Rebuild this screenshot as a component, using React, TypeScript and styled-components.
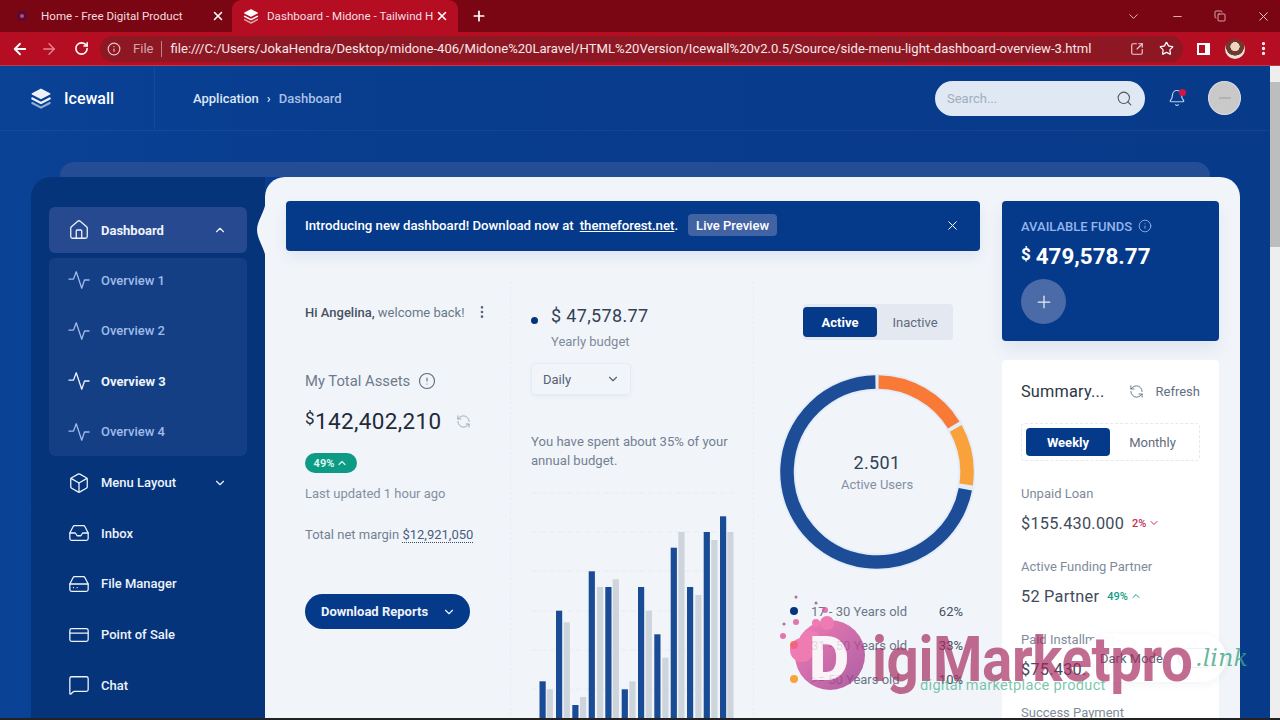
import React from "react";
import styled, { createGlobalStyle } from "styled-components";
import {
  ArrowLeft, ArrowRight, Bell, Box, ChevronDown, ChevronUp, CircleAlert, CreditCard,
  EllipsisVertical, HardDrive, House, Inbox, Info, MessageSquare, Minus, Plus,
  RefreshCcw, RotateCw, Search, Star, X, Copy, SquareArrowOutUpRight,
} from "lucide-react";

const GlobalStyle = createGlobalStyle`
  html, body { margin: 0; padding: 0; overflow: hidden; }
  body { font-family: Roboto, "Liberation Sans", sans-serif; color: #1e293b; }
  * { box-sizing: border-box; }
`;

const Frame = styled.div`
  position: relative;
  width: 1280px;
  height: 720px;
  overflow: hidden;
  display: flex;
  flex-direction: column;
  background: #222;
`;

/* browser chrome */
const TabBar = styled.div`
  height: 32px;
  background: #7b0613;
  display: flex;
  align-items: center;
  color: #fff;
  flex: none;
`;
const HomeTab = styled.div`
  width: 232px;
  height: 32px;
  padding: 0 7px 0 17px;
  display: flex;
  align-items: center;
  font-size: 11.6px;
  color: #f3dcdf;
`;
const ActiveTab = styled(HomeTab)`
  width: 226px;
  padding: 0 9px 0 11px;
  background: #b50d22;
  border-radius: 9px 9px 0 0;
  color: #f6dfe2;
`;
const TabTitle = styled.span<{ $wide?: boolean }>`
  flex: 1;
  margin-left: ${(p) => (p.$wide ? "14px" : "8px")};
  white-space: nowrap;
  overflow: hidden;
`;
const Favicon = styled.span`
  width: 10px;
  height: 10px;
  border-radius: 50%;
  background: #e0368c;
  border: 3px solid #4d1030;
  flex: none;
`;
const NewTab = styled.div`
  margin-left: 13px;
  display: flex;
`;
const WindowControls = styled.div`
  margin-left: auto;
  display: flex;
  align-items: center;
  gap: 30px;
  padding-right: 9px;
  color: #eac9cd;
`;
const Toolbar = styled.div`
  height: 34px;
  background: #b50d22;
  border-bottom: 1px solid #b83a55;
  display: flex;
  align-items: center;
  padding-left: 11px;
  flex: none;
  color: #fff;
`;
const NavButtons = styled.div`
  display: flex;
  align-items: center;
  gap: 11px;
  width: 89px;
  & > svg:last-child { margin-left: 5px; }
`;
const Omnibox = styled.div`
  width: 1083px;
  height: 26px;
  border-radius: 13px;
  background: #8e1724;
  display: flex;
  align-items: center;
  padding: 0 9px 0 7px;
  font-size: 13.1px;
  color: #f7e7e9;
`;
const FileLabel = styled.span`
  margin-left: 12px;
  padding-right: 7px;
  border-right: 1px solid #c78089;
  color: #d7a6ac;
  line-height: 16px;
`;
const UrlText = styled.span`
  margin-left: 9px;
  white-space: nowrap;
`;
const OmniIcons = styled.div`
  margin-left: auto;
  display: flex;
  align-items: center;
  gap: 15px;
  color: #eacdd0;
`;
const ToolbarRight = styled.div`
  display: flex;
  align-items: center;
  gap: 15px;
  margin-left: 14px;
  & > svg { margin-left: -5px; }
`;
const SidePanelIcon = styled.span`
  width: 13px;
  height: 12px;
  border: 2px solid #fff;
  border-right-width: 5px;
  background: #b50d22;
  display: block;
`;
const ProfilePic = styled.span`
  width: 20px;
  height: 20px;
  border-radius: 50%;
  background: radial-gradient(circle at 50% 38%, #f2d3c0 0 28%, #6a3b2e 30% 55%, #e9e3dc 58%);
  display: block;
`;

/* page */
const Viewport = styled.div`
  flex: 1;
  min-height: 0;
  display: flex;
`;
const Page = styled.div`
  flex: 1;
  min-width: 0;
  display: flex;
  flex-direction: column;
  background: linear-gradient(90deg, #0a4296 0, #083c8d 30%, #083a8a 100%);
  overflow: hidden;
`;
const Scrollbar = styled.div`
  width: 10px;
  background: #eeeeee;
  padding-top: 16px;
`;
const ScrollThumb = styled.div`
  height: 165px;
  background: #bdbdbd;
`;
const BottomEdge = styled.div`
  height: 2px;
  background: #222;
  flex: none;
`;

const TopBar = styled.div`
  height: 65px;
  flex: none;
  display: flex;
  align-items: center;
  border-bottom: 1px solid rgba(255, 255, 255, 0.05);
  padding-right: 29px;
`;
const Brand = styled.div`
  width: 155px;
  height: 100%;
  padding-left: 30px;
  display: flex;
  align-items: center;
  gap: 12px;
  border-right: 1px solid rgba(255, 255, 255, 0.05);
  color: #fff;
  font-size: 16px;
  font-weight: 500;
`;
const Crumbs = styled.div`
  margin-left: 38px;
  display: flex;
  align-items: center;
  gap: 8px;
  font-size: 13px;
  font-weight: 500;
  color: #dbe6f6;
`;
const CrumbLast = styled.span`
  color: #a9c0e6;
`;
const TopRight = styled.div`
  margin-left: auto;
  display: flex;
  align-items: center;
`;
const SearchBox = styled.div`
  width: 210px;
  height: 35px;
  border-radius: 18px;
  background: #dfe8f3;
  display: flex;
  align-items: center;
  justify-content: space-between;
  padding: 0 12px;
  font-size: 13px;
  color: #a0adbe;
`;
const BellWrap = styled.div`
  position: relative;
  margin-left: 23px;
  display: flex;
  color: #b9d2f5;
`;
const BellDot = styled.span`
  position: absolute;
  top: 0;
  right: 0;
  width: 7px;
  height: 7px;
  border-radius: 50%;
  background: #d3163f;
`;
const Avatar = styled.div`
  width: 33px;
  height: 34px;
  margin-left: 22px;
  border-radius: 50%;
  background: #c9c9c9;
  border: 1px solid #d9dee6;
  display: flex;
  align-items: center;
  justify-content: center;
`;
const AvatarMark = styled.span`
  width: 12px;
  height: 2px;
  background: #b3b3b3;
`;

const Stage = styled.div`
  flex: 1;
  min-height: 0;
  padding-top: 31px;
  display: flex;
  flex-direction: column;
`;
const GhostStrip = styled.div`
  height: 15px;
  margin: 0 60px;
  flex: none;
  border-radius: 14px 14px 0 0;
  background: #244d95;
`;
const Shell = styled.div`
  flex: 1;
  min-height: 0;
  margin: 0 30px 0 31px;
  display: flex;
`;

/* side menu */
const Sidebar = styled.aside`
  width: 234px;
  flex: none;
  padding: 30px 18px 0;
  background: #05347b;
  border-radius: 20px 0 0 0;
`;
const NavRow = styled.div<{ $active?: boolean; $sub?: boolean; $current?: boolean }>`
  height: ${(p) => (p.$active ? "46px" : "44px")};
  margin-bottom: ${(p) => (p.$active ? "5px" : "6.6px")};
  padding: 0 20px 0 19px;
  display: flex;
  align-items: center;
  gap: 11px;
  border-radius: 6px;
  font-size: 13px;
  font-weight: ${(p) => (p.$active || p.$current ? 700 : 500)};
  background: ${(p) => (p.$active ? "#26498f" : "transparent")};
  color: ${(p) => (p.$sub && !p.$current ? "#9fbbe9" : "#eef3fb")};
  &:last-child { margin-bottom: 0; }
`;
const NavLabel = styled.span`
  flex: 1;
`;
const SubPanel = styled.div`
  background: #153f85;
  border-radius: 6px;
  padding-bottom: 2px;
  margin-bottom: 5px;
`;
const PlainNav = styled.div`
  display: flex;
  flex-direction: column;
`;
const Notch = styled.svg`
  position: absolute;
  left: -9px;
  top: 24px;
`;

/* white panel */
const Content = styled.main`
  position: relative;
  flex: 1;
  min-width: 0;
  display: flex;
  gap: 22px;
  padding: 24px 21px 0;
  background: #f1f5fa;
  border-radius: 20px 20px 0 0;
`;
const MainColumn = styled.div`
  width: 694px;
  flex: none;
`;
const SideColumn = styled.div`
  width: 217px;
  flex: none;
  display: flex;
  flex-direction: column;
  gap: 19px;
`;
const Banner = styled.div`
  height: 50px;
  background: #053a8a;
  border-radius: 4px;
  display: flex;
  align-items: center;
  padding: 0 20px 2px 19px;
  color: #fff;
  font-size: 13.2px;
  font-weight: 500;
  box-shadow: 0 6px 14px rgba(15, 50, 110, 0.08);
`;
const BannerLink = styled.span`
  margin-left: 6px;
  text-decoration: underline;
`;
const PreviewTag = styled.span`
  margin-left: 10px;
  width: 89px;
  height: 22px;
  border-radius: 4px;
  background: #4263a3;
  display: flex;
  align-items: center;
  justify-content: center;
  font-size: 13px;
`;
const BannerClose = styled.span`
  margin-left: auto;
  display: flex;
`;

const Panels = styled.div`
  margin-top: 30px;
  display: grid;
  grid-template-columns: 225px 243px 226px;
`;
const StatsCol = styled.div`
  padding: 22px 20px 0 19px;
  border-right: 1px dashed #e8ecf3;
  height: 460px;
`;
const BudgetCol = styled(StatsCol)`
  padding-left: 20px;
`;
const UsersCol = styled.div`
  padding: 23px 0 0 26px;
`;

const Greeting = styled.div`
  height: 18px;
  display: flex;
  align-items: center;
  justify-content: space-between;
  font-size: 13px;
  color: #6b7789;
  width: 185px;
  & > svg { color: #5b6678; }
`;
const GreetName = styled.strong`
  font-weight: 500;
  color: #475163;
`;
const AssetsTitle = styled.div`
  margin-top: 50px;
  height: 20px;
  display: flex;
  align-items: center;
  gap: 8px;
  font-size: 14.8px;
  color: #6e7a8c;
  & > svg { color: #5f6a7b; }
`;
const BigAmount = styled.div`
  margin-top: 15px;
  height: 30px;
  display: flex;
  align-items: center;
  font-size: 22.5px;
  letter-spacing: 0.35px;
  color: #1f2a3a;
  & > svg { margin-left: 15px; color: #9aa5b4; }
`;
const Currency = styled.span`
  align-self: flex-start;
  font-size: 17px;
  line-height: 24px;
`;
const UpBadge = styled.div`
  margin-top: 17px;
  width: 52px;
  height: 20px;
  border-radius: 10px;
  background: #0e9b85;
  color: #d8f5ee;
  display: flex;
  align-items: center;
  justify-content: center;
  gap: 2px;
  font-size: 11px;
  font-weight: 700;
`;
const Muted = styled.div`
  margin-top: 12px;
  height: 18px;
  line-height: 18px;
  font-size: 13px;
  color: #8490a1;
`;
const NetMargin = styled(Muted)`
  margin-top: 23px;
  color: #758193;
`;
const Dotted = styled.span`
  color: #4b5e80;
  border-bottom: 1px dotted #3c4a66;
`;
const DownloadButton = styled.div`
  margin-top: 50px;
  width: 165px;
  height: 35px;
  border-radius: 18px;
  background: #053a8a;
  color: #eef3fb;
  display: flex;
  align-items: center;
  padding: 0 14px 0 16px;
  justify-content: space-between;
  font-size: 13px;
  font-weight: 700;
`;

const BudgetHead = styled.div`
  height: 24px;
  display: flex;
  align-items: center;
  font-size: 18px;
  letter-spacing: 0.35px;
  color: #334155;
`;
const BudgetDot = styled.span`
  width: 7px;
  height: 7px;
  border-radius: 50%;
  background: #05347b;
  margin: 10px 13px 0 0;
`;
const BudgetCaption = styled.div`
  margin: 6px 0 0 20px;
  height: 18px;
  line-height: 18px;
  font-size: 13px;
  color: #7e8a9b;
`;
const Dropdown = styled.div`
  margin-top: 12px;
  width: 100px;
  height: 32px;
  padding: 0 10px 0 11px;
  display: flex;
  align-items: center;
  justify-content: space-between;
  border: 1px solid #e6ebf2;
  border-radius: 4px;
  box-shadow: 0 2px 4px rgba(30, 50, 90, 0.05);
  font-size: 13px;
  color: #566174;
`;
const Para = styled.p`
  margin: 36.5px 0 0;
  width: 205px;
  font-size: 13.1px;
  line-height: 19px;
  color: #748092;
`;
const Chart = styled.svg`
  display: block;
  margin-top: 20px;
`;

const Segmented = styled.div`
  margin-left: 23px;
  width: 150px;
  height: 36px;
  padding: 3px 0;
  border-radius: 4px;
  background: #e4e9f1;
  display: flex;
  font-size: 13px;
`;
const SegActive = styled.div`
  width: 74px;
  border-radius: 4px;
  background: #053a8a;
  color: #fff;
  font-weight: 700;
  display: flex;
  align-items: center;
  justify-content: center;
`;
const SegIdle = styled.div`
  flex: 1;
  color: #5f6b7c;
  display: flex;
  align-items: center;
  justify-content: center;
`;
const DonutWrap = styled.div`
  position: relative;
  margin: 34px 0 0 -1px;
  width: 196px;
  height: 196px;
`;
const DonutCenter = styled.div`
  position: absolute;
  inset: 0;
  display: flex;
  flex-direction: column;
  align-items: center;
  justify-content: center;
`;
const DonutValue = styled.div`
  font-size: 18px;
  letter-spacing: 0.4px;
  color: #334155;
`;
const DonutLabel = styled.div`
  margin-top: 4px;
  font-size: 13px;
  color: #8490a1;
`;
const Legend = styled.div`
  margin-top: 31px;
  width: 183px;
  display: flex;
  flex-direction: column;
  gap: 14px;
  padding-left: 10px;
`;
const LegendRow = styled.div`
  height: 20px;
  display: flex;
  align-items: center;
  gap: 13px;
  font-size: 13px;
  color: #6b7789;
`;
const LegendDot = styled.span<{ $color: string }>`
  width: 8px;
  height: 8px;
  border-radius: 50%;
  background: ${(p) => p.$color};
`;
const LegendPct = styled.span`
  margin-left: auto;
  color: #475163;
`;

/* right column */
const FundsCard = styled.div`
  height: 140px;
  flex: none;
  padding: 16px 19px 0;
  background: #053a8a;
  border-radius: 4px;
  color: #fff;
  box-shadow: 0 8px 16px rgba(15, 50, 110, 0.08);
`;
const FundsTitle = styled.div`
  height: 18px;
  display: flex;
  align-items: center;
  gap: 6px;
  font-size: 13px;
  font-weight: 500;
  color: #94b4ec;
`;
const FundsValue = styled.div`
  margin-top: 8px;
  height: 26px;
  display: flex;
  font-size: 22.4px;
  font-weight: 700;
  align-items: center;
  gap: 5px;
`;
const FundsCurrency = styled.span`
  font-size: 17px;
  align-self: flex-start;
  line-height: 22px;
`;
const RoundPlus = styled.div`
  margin-top: 10px;
  width: 45px;
  height: 45px;
  border-radius: 50%;
  background: #4a6aa8;
  display: flex;
  align-items: center;
  justify-content: center;
  color: #e6edf9;
`;
const SummaryCard = styled.div`
  flex: 1;
  min-height: 0;
  overflow: hidden;
  padding: 20px 19px 0;
  background: #fff;
  border-radius: 4px 4px 0 0;
`;
const SummaryHead = styled.div`
  height: 22px;
  display: flex;
  align-items: center;
  font-size: 16.3px;
  letter-spacing: 0.2px;
  color: #2c3645;
`;
const RefreshLink = styled.span`
  margin-left: auto;
  display: flex;
  align-items: center;
  gap: 12px;
  font-size: 13px;
  letter-spacing: 0;
  color: #637084;
`;
const PeriodTabs = styled.div`
  margin-top: 21px;
  height: 38px;
  padding: 4px;
  border: 1px dashed #e4e8ef;
  border-radius: 4px;
  display: flex;
  font-size: 13px;
`;
const PeriodActive = styled(SegActive)`
  width: 84px;
`;
const SummaryLabel = styled.div`
  margin-top: 24px;
  height: 18px;
  line-height: 18px;
  font-size: 13px;
  color: #7f8b9c;
  & ~ & { margin-top: 23px; }
`;
const SummaryValue = styled.div`
  margin-top: 8px;
  height: 24px;
  display: flex;
  align-items: center;
  font-size: 16.3px;
  letter-spacing: 0.25px;
  color: #414b5b;
`;
const Delta = styled.span<{ $up?: boolean }>`
  margin-left: 8px;
  display: flex;
  align-items: center;
  gap: 2px;
  font-size: 11px;
  letter-spacing: 0;
  font-weight: 500;
  color: ${(p) => (p.$up ? "#0e9b85" : "#c4305a")};
`;

/* floating bits */
const DarkModePill = styled.div`
  position: absolute;
  left: 1083px;
  top: 634px;
  width: 143px;
  height: 48px;
  border-radius: 24px;
  background: rgba(255, 255, 255, 0.96);
  box-shadow: 0 2px 10px rgba(30, 50, 90, 0.06);
  display: flex;
  align-items: center;
  padding: 0 12px 0 17px;
  font-size: 13px;
  color: #5c6778;
  justify-content: space-between;
`;
const FaintToggle = styled.span`
  width: 36px;
  height: 20px;
  border-radius: 10px;
  border: 1px solid #eef1f5;
`;
const Watermark = styled.div`
  position: absolute;
  left: 778px;
  top: 594px;
  width: 480px;
  height: 110px;
  pointer-events: none;
  display: flex;
`;
const WaterLogo = styled.div`
  position: relative;
  width: 92px;
  height: 100px;
  flex: none;
  opacity: 0.8;
`;
const LogoLetter = styled.span`
  position: absolute;
  left: 31px;
  top: 27px;
  font-size: 62px;
  line-height: 76px;
  font-weight: 900;
  color: #fdf3f7;
`;
const WaterText = styled.div`
  position: relative;
  flex: 1;
`;
const WaterWord = styled.span`
  position: absolute;
  left: 2px;
  top: 33px;
  font-size: 56.5px;
  line-height: 66px;
  font-weight: 700;
  letter-spacing: -0.4px;
  color: rgba(164, 38, 92, 0.68);
  white-space: nowrap;
  transform: scaleY(1.12);
`;
const WaterLink = styled.span`
  position: absolute;
  left: 325px;
  top: 44px;
  font-family: "DejaVu Serif", serif;
  font-style: italic;
  font-size: 24px;
  line-height: 40px;
  color: rgba(60, 165, 130, 0.78);
`;
const WaterSub = styled.span`
  position: absolute;
  left: 50px;
  top: 81px;
  font-size: 14.6px;
  line-height: 20px;
  letter-spacing: 0.3px;
  color: rgba(70, 175, 140, 0.72);
  white-space: nowrap;
`;

const ActivityIcon = ({ size = 22 }: { size?: number }) => (
  <svg width={size} height={size} viewBox="0 0 24 24" fill="none" stroke="currentColor" strokeWidth="1.4" strokeLinecap="round" strokeLinejoin="round">
    <polyline points="1 11 6 11 9 3 15 21 18 12 23 12" />
  </svg>
);

// the stacked logo: solid top sheet, two chevrons under it
const StackIcon = ({ size = 24, color = "#eef3fb" }: { size?: number; color?: string }) => (
  <svg width={size} height={size} viewBox="0 0 24 24" fill="none" stroke={color} strokeWidth="2.4" strokeLinecap="round" strokeLinejoin="round">
    <path d="M12 2.5 21.5 7.5 12 12.5 2.5 7.5Z" fill={color} strokeWidth="1.6" />
    <polyline points="2.5 12.5 12 17.5 21.5 12.5" />
    <polyline points="2.5 17.5 12 22.5 21.5 17.5" opacity="0.6" />
  </svg>
);

const bars = [
  [539.5, 681.3, 546.7, 689.3],
  [556, 610.7, 563.7, 622.3],
  [572.3, 705, 580, 697],
  [588.7, 571.3, 597, 587],
  [605.3, 587, 612.7, 579.3],
  [621.7, 689.3, 629.3, 681.3],
  [638, 587, 645.7, 610.7],
  [654.3, 634.3, 662.3, 657.7],
  [670.7, 547.7, 678.3, 532],
  [687, 587, 695.3, 595],
  [703.7, 532, 711.3, 540],
  [720, 516.3, 727.3, 532],
];
const gridLines = [493, 532, 571, 611, 650, 689];

const ages = [
  { label: "17 - 30 Years old", pct: "62%", color: "#05347b" },
  { label: "31 - 50 Years old", pct: "33%", color: "#f97a36" },
  { label: ">= 50 Years old", pct: "10%", color: "#f9a23b" },
];

// angle in degrees clockwise from 12 o'clock
function arc(from: number, to: number, r = 90, c = 98) {
  const pt = (a: number) => {
    const t = ((a - 90) * Math.PI) / 180;
    return `${(c + r * Math.cos(t)).toFixed(2)} ${(c + r * Math.sin(t)).toFixed(2)}`;
  };
  return `M ${pt(from)} A ${r} ${r} 0 ${to - from > 180 ? 1 : 0} 1 ${pt(to)}`;
}

export default function App() {
  return (
    <Frame>
      <GlobalStyle />
      <TabBar>
        <HomeTab>
          <Favicon />
          <TabTitle $wide>Home - Free Digital Product</TabTitle>
          <X size={14} color="#fff" strokeWidth={2.6} />
        </HomeTab>
        <ActiveTab>
          <StackIcon size={16} color="#fff" />
          <TabTitle>Dashboard - Midone - Tailwind H</TabTitle>
          <X size={14} color="#fff" strokeWidth={2.6} />
        </ActiveTab>
        <NewTab><Plus size={16} strokeWidth={2.6} /></NewTab>
        <WindowControls>
          <ChevronDown size={15} strokeWidth={1.4} />
          <Minus size={13} strokeWidth={1.6} />
          <Copy size={12} strokeWidth={1.6} />
          <X size={15} strokeWidth={1.6} />
        </WindowControls>
      </TabBar>
      <Toolbar>
        <NavButtons>
          <ArrowLeft size={18} strokeWidth={2.4} />
          <ArrowRight size={18} strokeWidth={1.8} color="#e58793" />
          <RotateCw size={15} strokeWidth={2.6} />
        </NavButtons>
        <Omnibox>
          <Info size={14} color="#e7c3c8" />
          <FileLabel>File</FileLabel>
          <UrlText>file:///C:/Users/JokaHendra/Desktop/midone-406/Midone%20Laravel/HTML%20Version/Icewall%20v2.0.5/Source/side-menu-light-dashboard-overview-3.html</UrlText>
          <OmniIcons>
            <SquareArrowOutUpRight size={14} />
            <Star size={15} color="#fff" />
          </OmniIcons>
        </Omnibox>
        <ToolbarRight>
          <SidePanelIcon />
          <ProfilePic />
          <EllipsisVertical size={17} strokeWidth={2.6} />
        </ToolbarRight>
      </Toolbar>
      <Viewport>
        <Page>
          <TopBar>
            <Brand>
              <StackIcon size={22} />
              Icewall
            </Brand>
            <Crumbs>
              Application
              <span>›</span>
              <CrumbLast>Dashboard</CrumbLast>
            </Crumbs>
            <TopRight>
              <SearchBox>
                Search...
                <Search size={17} color="#4c5665" strokeWidth={1.5} />
              </SearchBox>
              <BellWrap>
                <Bell size={18} strokeWidth={1.6} />
                <BellDot />
              </BellWrap>
              <Avatar><AvatarMark /></Avatar>
            </TopRight>
          </TopBar>
          <Stage>
            <GhostStrip />
            <Shell>
              <Sidebar>
                <NavRow $active>
                  <House size={22} strokeWidth={1.4} />
                  <NavLabel>Dashboard</NavLabel>
                  <ChevronUp size={14} />
                </NavRow>
                <SubPanel>
                  <NavRow $sub><ActivityIcon /><NavLabel>Overview 1</NavLabel></NavRow>
                  <NavRow $sub><ActivityIcon /><NavLabel>Overview 2</NavLabel></NavRow>
                  <NavRow $sub $current><ActivityIcon /><NavLabel>Overview 3</NavLabel></NavRow>
                  <NavRow $sub><ActivityIcon /><NavLabel>Overview 4</NavLabel></NavRow>
                </SubPanel>
                <PlainNav>
                  <NavRow>
                    <Box size={22} strokeWidth={1.4} />
                    <NavLabel>Menu Layout</NavLabel>
                    <ChevronDown size={14} />
                  </NavRow>
                  <NavRow><Inbox size={22} strokeWidth={1.4} /><NavLabel>Inbox</NavLabel></NavRow>
                  <NavRow><HardDrive size={22} strokeWidth={1.4} /><NavLabel>File Manager</NavLabel></NavRow>
                  <NavRow><CreditCard size={22} strokeWidth={1.4} /><NavLabel>Point of Sale</NavLabel></NavRow>
                  <NavRow><MessageSquare size={22} strokeWidth={1.4} /><NavLabel>Chat</NavLabel></NavRow>
                </PlainNav>
              </Sidebar>
              <Content>
                <Notch width="10" height="58" viewBox="0 0 10 58">
                  <path d="M10 0 C9 10 1 20 1 29 C1 38 9 48 10 58 Z" fill="#f1f5fa" />
                </Notch>
                <MainColumn>
                  <Banner>
                    Introducing new dashboard! Download now at
                    <BannerLink>themeforest.net</BannerLink>.
                    <PreviewTag>Live Preview</PreviewTag>
                    <BannerClose><X size={15} strokeWidth={1.6} /></BannerClose>
                  </Banner>
                  <Panels>
                    <StatsCol>
                      <Greeting>
                        <span><GreetName>Hi Angelina,</GreetName> welcome back!</span>
                        <EllipsisVertical size={16} />
                      </Greeting>
                      <AssetsTitle>
                        My Total Assets
                        <CircleAlert size={18} strokeWidth={1.5} />
                      </AssetsTitle>
                      <BigAmount>
                        <Currency>$</Currency>142,402,210
                        <RefreshCcw size={15} strokeWidth={1.5} />
                      </BigAmount>
                      <UpBadge>49%<ChevronUp size={12} strokeWidth={2.4} /></UpBadge>
                      <Muted>Last updated 1 hour ago</Muted>
                      <NetMargin>Total net margin <Dotted>$12,921,050</Dotted></NetMargin>
                      <DownloadButton>
                        Download Reports
                        <ChevronDown size={14} />
                      </DownloadButton>
                    </StatsCol>
                    <BudgetCol>
                      <BudgetHead>
                        <BudgetDot />
                        $ 47,578.77
                      </BudgetHead>
                      <BudgetCaption>Yearly budget</BudgetCaption>
                      <Dropdown>Daily<ChevronDown size={14} /></Dropdown>
                      <Para>You have spent about 35% of your annual budget.</Para>
                      <Chart width="212" height="230" viewBox="531 490 212 230">
                        {gridLines.map((y) => (
                          <line key={y} x1="531" x2="733" y1={y} y2={y} stroke="#e9edf3" strokeDasharray="6 3" />
                        ))}
                        {bars.map(([dx, dy, lx, ly]) => (
                          <g key={dx}>
                            <rect x={dx} y={dy} width="6.2" height={720 - dy} fill="#1a4b95" />
                            <rect x={lx} y={ly} width="6.2" height={720 - ly} fill="#ced4dc" />
                          </g>
                        ))}
                      </Chart>
                    </BudgetCol>
                    <UsersCol>
                      <Segmented>
                        <SegActive>Active</SegActive>
                        <SegIdle>Inactive</SegIdle>
                      </Segmented>
                      <DonutWrap>
                        <svg width="196" height="196" viewBox="0 0 196 196">
                          <circle cx="98" cy="98" r="90" fill="none" stroke="#e3ecf8" strokeWidth="17" />
                          <path d={arc(1, 58.5)} fill="none" stroke="#f97a36" strokeWidth="13.5" />
                          <path d={arc(61, 98)} fill="none" stroke="#f9a23b" strokeWidth="13.5" />
                          <path d={arc(101, 359)} fill="none" stroke="#1e4d98" strokeWidth="13.5" />
                        </svg>
                        <DonutCenter>
                          <DonutValue>2.501</DonutValue>
                          <DonutLabel>Active Users</DonutLabel>
                        </DonutCenter>
                      </DonutWrap>
                      <Legend>
                        {ages.map((a) => (
                          <LegendRow key={a.label}>
                            <LegendDot $color={a.color} />
                            {a.label}
                            <LegendPct>{a.pct}</LegendPct>
                          </LegendRow>
                        ))}
                      </Legend>
                    </UsersCol>
                  </Panels>
                </MainColumn>
                <SideColumn>
                  <FundsCard>
                    <FundsTitle>AVAILABLE FUNDS <Info size={14} strokeWidth={1.5} /></FundsTitle>
                    <FundsValue><FundsCurrency>$</FundsCurrency>479,578.77</FundsValue>
                    <RoundPlus><Plus size={20} strokeWidth={1.5} /></RoundPlus>
                  </FundsCard>
                  <SummaryCard>
                    <SummaryHead>
                      Summary...
                      <RefreshLink><RefreshCcw size={15} strokeWidth={1.5} />Refresh</RefreshLink>
                    </SummaryHead>
                    <PeriodTabs>
                      <PeriodActive>Weekly</PeriodActive>
                      <SegIdle>Monthly</SegIdle>
                    </PeriodTabs>
                    <SummaryLabel>Unpaid Loan</SummaryLabel>
                    <SummaryValue>$155.430.000<Delta>2%<ChevronDown size={12} strokeWidth={2} /></Delta></SummaryValue>
                    <SummaryLabel>Active Funding Partner</SummaryLabel>
                    <SummaryValue>52 Partner<Delta $up>49%<ChevronUp size={12} strokeWidth={2} /></Delta></SummaryValue>
                    <SummaryLabel>Paid Installment</SummaryLabel>
                    <SummaryValue>$75.430.000</SummaryValue>
                    <SummaryLabel>Success Payment</SummaryLabel>
                  </SummaryCard>
                </SideColumn>
              </Content>
            </Shell>
          </Stage>
        </Page>
        <Scrollbar><ScrollThumb /></Scrollbar>
      </Viewport>
      <BottomEdge />
      <DarkModePill>Dark Mode<FaintToggle /></DarkModePill>
      <Watermark>
        <WaterLogo>
          <svg width="92" height="100" viewBox="0 0 92 100">
            <defs>
              <linearGradient id="wm" x1="0" y1="0" x2="1" y2="1">
                <stop offset="0" stopColor="#f25fa3" />
                <stop offset="1" stopColor="#9a3a8e" />
              </linearGradient>
            </defs>
            <circle cx="52" cy="61" r="35" fill="url(#wm)" />
            <circle cx="24" cy="56" r="12" fill="#ee5da0" />
            <circle cx="32" cy="46" r="10" fill="#ee5da0" />
            <circle cx="49" cy="29" r="7" fill="#ee5da0" />
            <circle cx="38" cy="29" r="4" fill="#ee5da0" />
            <circle cx="18" cy="28" r="3" fill="#e0559a" />
            <circle cx="5" cy="42" r="3" fill="#e0559a" />
            <circle cx="6" cy="30" r="1.5" fill="#a84a80" />
            <circle cx="18" cy="3" r="1.5" fill="#a84a80" />
            <circle cx="38" cy="9" r="1.5" fill="#a84a80" />
            <circle cx="47" cy="16" r="3" fill="#e0559a" />
          </svg>
          <LogoLetter>D</LogoLetter>
        </WaterLogo>
        <WaterText>
          <WaterWord>igiMarketpro</WaterWord>
          <WaterLink>.link</WaterLink>
          <WaterSub>digital marketplace product</WaterSub>
        </WaterText>
      </Watermark>
    </Frame>
  );
}
